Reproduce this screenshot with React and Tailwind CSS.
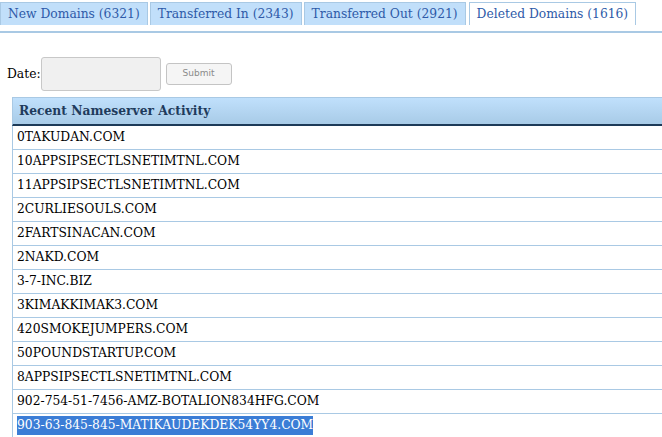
import React from "react";

const tabs = [
  { label: "New Domains (6321)", active: false },
  { label: "Transferred In (2343)", active: false },
  { label: "Transferred Out (2921)", active: false },
  { label: "Deleted Domains (1616)", active: true },
];

const domains = [
  "0TAKUDAN.COM",
  "10APPSIPSECTLSNETIMTNL.COM",
  "11APPSIPSECTLSNETIMTNL.COM",
  "2CURLIESOULS.COM",
  "2FARTSINACAN.COM",
  "2NAKD.COM",
  "3-7-INC.BIZ",
  "3KIMAKKIMAK3.COM",
  "420SMOKEJUMPERS.COM",
  "50POUNDSTARTUP.COM",
  "8APPSIPSECTLSNETIMTNL.COM",
  "902-754-51-7456-AMZ-BOTALION834HFG.COM",
  "903-63-845-845-MATIKAUDEKDEK54YY4.COM",
];

const App = () => {
  return (
    <div className="w-[662px] h-[437px] overflow-hidden bg-white font-['DejaVu_Serif',serif] text-[12.3px] text-black">
      <div className="flex items-start gap-[2px] pt-[2px] border-b-2 border-[#a9c9e4] h-[33px]">
        {tabs.map((tab) => (
          <div
            key={tab.label}
            className={
              "h-[23px] px-[7px] flex items-center whitespace-nowrap border border-b-0 border-[#a9c9e4] text-[#2e5aa8] " +
              (tab.active ? "bg-white ml-[1px]" : "bg-[#c1dffa]")
            }
          >
            {tab.label}
          </div>
        ))}
      </div>

      <div className="flex items-center pl-[7px] mt-[24px] h-[34px]">
        <span>Date:</span>
        <div className="w-[120px] h-[34px] bg-[#f0f0f0] border border-[#c8c8c8] rounded-[3px]" />
        <button
          type="button"
          className="ml-[5px] w-[66px] h-[22px] border border-[#c4c4c4] rounded-[3px] bg-[#f5f5f5] text-[#8a8a8a] text-[9px] font-['DejaVu_Sans',sans-serif]"
        >
          Submit
        </button>
      </div>

      <div className="ml-[12px] mt-[6px] w-[670px]">
        <div className="h-[29px] flex items-center pl-[6px] bg-gradient-to-b from-[#c0e0fc] to-[#a8cbe7] border-t border-l border-[#a9c9e4] border-b-2 border-b-[#1d3a58] font-bold text-[#1f3b5c]">
          Recent Nameserver Activity
        </div>
        {domains.map((d, i) => (
          <div
            key={d}
            className="h-[24px] flex items-center pl-[4px] border-l border-b border-[#a9c9e4]"
          >
            {i === domains.length - 1 ? (
              <span className="bg-[#3b7dd6] text-white">{d}</span>
            ) : (
              d
            )}
          </div>
        ))}
      </div>
    </div>
  );
};

export default App;
